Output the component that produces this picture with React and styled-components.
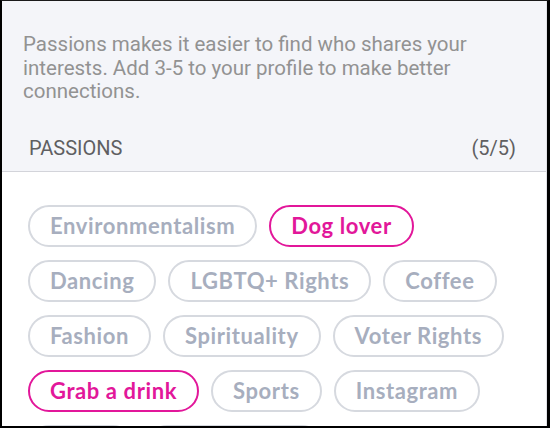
import React from "react";
import styled, { createGlobalStyle } from "styled-components";

const Global = createGlobalStyle`
  * { box-sizing: border-box; }
  html, body { margin: 0; padding: 0; background: #fff; }
`;

const Frame = styled.div`
  width: 550px;
  height: 428px;
  overflow: hidden;
  border-top: 1px solid #1a1a1a;
  border-left: 2px solid #000;
  border-right: 3px solid #000;
  border-bottom: 2px solid #000;
  display: flex;
  flex-direction: column;
  background: #fff;
`;

const Inner = styled.div`
  flex: 1;
  min-height: 0;
  display: flex;
  flex-direction: column;
  border-right: 1px solid #e2e3e8;
  overflow: hidden;
`;

const Intro = styled.section`
  background: #f4f5f9;
  padding: 32px 30px 0 21px;
  border-bottom: 1px solid #d3d4da;
`;

const Description = styled.p`
  margin: 0;
  font-family: Roboto, "Liberation Sans", sans-serif;
  font-size: 20.5px;
  line-height: 23.5px;
  color: #929292;
`;

const Header = styled.div`
  display: flex;
  justify-content: space-between;
  align-items: center;
  padding: 32px 0 11px 6px;
  font-family: Roboto, "Liberation Sans", sans-serif;
  font-size: 20px;
  line-height: 24px;
  color: #5f5f62;
`;

const Chips = styled.div`
  display: flex;
  flex-wrap: wrap;
  column-gap: 12px;
  row-gap: 13px;
  padding: 33px 30px 0 26px;
`;

const Chip = styled.span`
  display: inline-flex;
  align-items: center;
  height: 42px;
  padding: 0 20px;
  border-radius: 21px;
  border: 2px solid ${(p) => (p.$active ? "#e2179a" : "#d6d9df")};
  color: ${(p) => (p.$active ? "#e2179a" : "#a7aebe")};
  font-family: Lato, "Open Sans", sans-serif;
  font-weight: 700;
  font-size: 22px;
  letter-spacing: 0.6px;
  white-space: nowrap;
`;

const passions = [
  ["Environmentalism", false],
  ["Dog lover", true],
  ["Dancing", false],
  ["LGBTQ+ Rights", false],
  ["Coffee", false],
  ["Fashion", false],
  ["Spirituality", false],
  ["Voter Rights", false],
  ["Grab a drink", true],
  ["Sports", false],
  ["Instagram", false],
  ["Travel", false],
  ["Photography", false],
];

export default function App() {
  return (
    <>
      <Global />
      <Frame>
        <Inner>
          <Intro>
            <Description>
              Passions makes it easier to find who shares your interests. Add
              3-5 to your profile to make better connections.
            </Description>
            <Header>
              <span>PASSIONS</span>
              <span>(5/5)</span>
            </Header>
          </Intro>
          <Chips>
            {passions.map(([name, active]) => (
              <Chip key={name} $active={active}>
                {name}
              </Chip>
            ))}
          </Chips>
        </Inner>
      </Frame>
    </>
  );
}
